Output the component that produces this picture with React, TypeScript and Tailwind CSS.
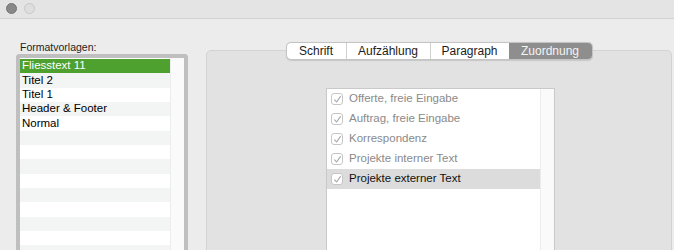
import React from "react"

const styles = ["Fliesstext 11", "Titel 2", "Titel 1", "Header & Footer", "Normal"]

const tabs = [
  { label: "Schrift", width: "w-[59px]" },
  { label: "Aufzählung", width: "w-[84px]" },
  { label: "Paragraph", width: "w-[79px]" },
  { label: "Zuordnung", width: "w-[83px]" },
]

const targets = [
  { label: "Offerte, freie Eingabe", active: false },
  { label: "Auftrag, freie Eingabe", active: false },
  { label: "Korrespondenz", active: false },
  { label: "Projekte interner Text", active: false },
  { label: "Projekte externer Text", active: true },
]

function Check() {
  return (
    <span className="flex h-[12px] w-[12px] shrink-0 items-center justify-center rounded-[3px] border border-[#c6c6c6] bg-white">
      <svg width="9" height="9" viewBox="0 0 9 9" fill="none">
        <path d="M1.6 4.8 L3.6 7 L7.4 1.6" stroke="#a6a6a6" strokeWidth="1.1" strokeLinecap="round" strokeLinejoin="round" />
      </svg>
    </span>
  )
}

export default function App() {
  const rows = Array.from({ length: 14 }, (_, i) => styles[i] ?? "")

  return (
    <div className="h-[250px] w-[674px] overflow-hidden bg-[#ececec] font-['Liberation_Sans',Arial,sans-serif] text-black">
      {/* title bar */}
      <div className="flex h-[19px] items-center gap-[7px] border-b border-[#d2d2d2] bg-[#e4e4e4] pb-[1px] pl-[6px]">
        <span className="h-[11px] w-[11px] rounded-full border border-[#767676] bg-[#888888]" />
        <span className="h-[11px] w-[11px] rounded-full border border-[#c8c8c8] bg-[#dedede]" />
      </div>

      <div className="flex pt-[22px]">
        {/* Formatvorlagen */}
        <div className="ml-[16px] w-[172px] shrink-0">
          <p className="ml-[4px] h-[13px] text-[10.5px] leading-[12px] text-[#1e1e1e]">Formatvorlagen:</p>
          <div className="flex h-[220px] rounded-t-[4px] border-[4px] border-b-0 border-[#bfbfbf] bg-white">
            <div className="w-[150px] pt-[1px]">
              {rows.map((name, i) => (
                <div
                  key={i}
                  className={
                    "flex h-[14.33px] items-center pl-[2px] text-[11.5px] leading-none " +
                    (i === 0 ? "bg-[#4ea12f] text-white" : i % 2 === 1 ? "bg-[#f3f4f4]" : "bg-white")
                  }
                >
                  {name}
                </div>
              ))}
            </div>
            <div className="flex-1 border-l border-[#ededed] bg-[#fafafa]" />
          </div>
        </div>

        {/* right panel */}
        <div className="ml-[18px] mt-[9px] flex h-[230px] w-[466px] flex-col rounded-[5px] border border-[#d3d3d3] bg-[#e2e2e2]">
          <div className="-mt-[9px] flex justify-center">
            <div className="flex h-[18px] overflow-hidden rounded-[5px] border border-[#c4c4c4] bg-white text-[12px] shadow-[0_0.5px_1px_rgba(0,0,0,0.12)]">
              {tabs.map((t, i) => (
                <div
                  key={t.label}
                  className={
                    "flex items-center justify-center " +
                    t.width +
                    (i > 0 && i < 3 ? " border-l border-[#d0d0d0]" : "") +
                    (i === 3 ? " bg-[#8e8e8e] text-[#f4f4f4]" : " text-[#1c1c1c]")
                  }
                >
                  {t.label}
                </div>
              ))}
            </div>
          </div>

          <div className="ml-[119px] mt-[28px] flex h-[220px] w-[229px] border border-b-0 border-[#c9c9c9] bg-white">
            <div className="w-[213px]">
              {targets.map((t) => (
                <div
                  key={t.label}
                  className={"flex h-[20px] items-center gap-[6px] pl-[4px] " + (t.active ? "bg-[#dcdcdc]" : "")}
                >
                  <Check />
                  <span className={"text-[11.5px] leading-none " + (t.active ? "text-[#111]" : "text-[#8a8a8a]")}>
                    {t.label}
                  </span>
                </div>
              ))}
            </div>
            <div className="flex-1 border-l border-[#ececec] bg-[#fafafa]" />
          </div>
        </div>
      </div>
    </div>
  )
}
